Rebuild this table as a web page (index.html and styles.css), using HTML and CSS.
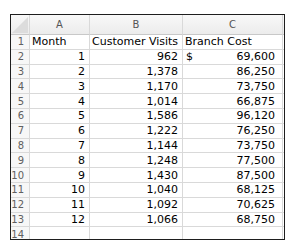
FILE: index.html
```html
<!DOCTYPE html>
<html>
<head>
<meta charset="utf-8">
<link rel="stylesheet" href="styles.css">
</head>
<body>
<div class="sheet">
  <div class="grid">
    <div class="cell hdr corner"><svg class="tri" viewBox="0 0 18 19" width="18" height="19"><polygon points="17,2 17,18 1,18" fill="#dcdcdc"/></svg></div>
    <div class="cell hdr col">A</div>
    <div class="cell hdr col">B</div>
    <div class="cell hdr col">C</div>
    <div class="cell hdr sliver"></div>

    <div class="cell rn">1</div><div class="cell txt">Month</div><div class="cell txt">Customer Visits</div><div class="cell txt">Branch Cost</div><div class="cell sliver"></div>
    <div class="cell rn">2</div><div class="cell num">1</div><div class="cell num">962</div><div class="cell acc"><span>$</span><span>69,600</span></div><div class="cell sliver"></div>
    <div class="cell rn">3</div><div class="cell num">2</div><div class="cell num">1,378</div><div class="cell acc"><span></span><span>86,250</span></div><div class="cell sliver"></div>
    <div class="cell rn">4</div><div class="cell num">3</div><div class="cell num">1,170</div><div class="cell acc"><span></span><span>73,750</span></div><div class="cell sliver"></div>
    <div class="cell rn">5</div><div class="cell num">4</div><div class="cell num">1,014</div><div class="cell acc"><span></span><span>66,875</span></div><div class="cell sliver"></div>
    <div class="cell rn">6</div><div class="cell num">5</div><div class="cell num">1,586</div><div class="cell acc"><span></span><span>96,120</span></div><div class="cell sliver"></div>
    <div class="cell rn">7</div><div class="cell num">6</div><div class="cell num">1,222</div><div class="cell acc"><span></span><span>76,250</span></div><div class="cell sliver"></div>
    <div class="cell rn">8</div><div class="cell num">7</div><div class="cell num">1,144</div><div class="cell acc"><span></span><span>73,750</span></div><div class="cell sliver"></div>
    <div class="cell rn">9</div><div class="cell num">8</div><div class="cell num">1,248</div><div class="cell acc"><span></span><span>77,500</span></div><div class="cell sliver"></div>
    <div class="cell rn">10</div><div class="cell num">9</div><div class="cell num">1,430</div><div class="cell acc"><span></span><span>87,500</span></div><div class="cell sliver"></div>
    <div class="cell rn">11</div><div class="cell num">10</div><div class="cell num">1,040</div><div class="cell acc"><span></span><span>68,125</span></div><div class="cell sliver"></div>
    <div class="cell rn">12</div><div class="cell num">11</div><div class="cell num">1,092</div><div class="cell acc"><span></span><span>70,625</span></div><div class="cell sliver"></div>
    <div class="cell rn">13</div><div class="cell num">12</div><div class="cell num">1,066</div><div class="cell acc"><span></span><span>68,750</span></div><div class="cell sliver"></div>
    <div class="cell rn last">14</div><div class="cell last"></div><div class="cell last"></div><div class="cell last"></div><div class="cell sliver last"></div>
  </div>
</div>
</body>
</html>
```
FILE: styles.css
```css
html, body {
  margin: 0;
  padding: 0;
  background: #ffffff;
}
body {
  font-family: "DejaVu Sans", Verdana, sans-serif;
  font-size: 11px;
  color: #000;
}
.sheet {
  margin: 14px 0 0 10px;
  width: 275px;
  height: 226px;
  box-sizing: border-box;
  border: 1px solid #1e1e1e;
  overflow: hidden;
}
.grid {
  display: grid;
  grid-template-columns: 19px 60px 93px 100px 1fr;
  grid-template-rows: 20px repeat(13, 14.8px) 1fr;
  height: 100%;
}
.cell {
  box-sizing: border-box;
  border-right: 1px solid #d9d9d9;
  border-bottom: 1px solid #d9d9d9;
  overflow: hidden;
  white-space: nowrap;
  line-height: 13px;
  display: flex;
  align-items: center;
}
.hdr {
  background: linear-gradient(#f8f8f8, #ececec);
  border-bottom-color: #c8c8c8;
}
.corner {
  padding: 0;
  align-items: stretch;
}
.tri {
  display: block;
}
.col {
  justify-content: center;
  color: #555;
  font-size: 10px;
}
.rn {
  background: #f7f7f7;
  color: #606060;
  font-size: 10px;
  justify-content: flex-end;
  padding-right: 5px;
  overflow: visible;
}
.txt {
  padding-left: 2px;
  overflow: visible;
}
.num {
  justify-content: flex-end;
  padding-right: 4px;
}
.acc {
  justify-content: space-between;
  padding-left: 3px;
  padding-right: 7px;
}
.sliver {
  border-right: none;
}
.last {
  border-bottom: none;
  align-items: flex-start;
  padding-top: 1px;
}
```
